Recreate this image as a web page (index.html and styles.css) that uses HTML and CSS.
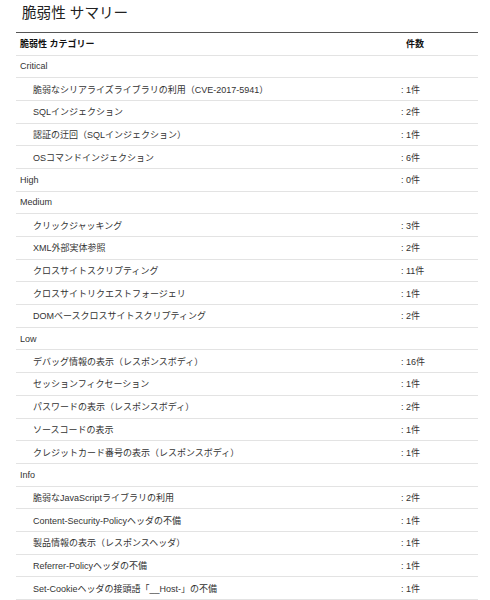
FILE: index.html
```html
<!DOCTYPE html>
<html lang="ja">
<head>
<meta charset="utf-8">
<title>脆弱性 サマリー</title>
<link rel="stylesheet" href="styles.css">
</head>
<body>
<h1 class="title">脆弱性 サマリー</h1>
<table class="summary">
  <thead>
    <tr><th class="col-name">脆弱性 カテゴリー</th><th class="col-count">件数</th></tr>
  </thead>
  <tbody>
    <tr class="cat"><td>Critical</td><td></td></tr>
    <tr class="item"><td>脆弱なシリアライズライブラリの利用（CVE-2017-5941）</td><td>: 1件</td></tr>
    <tr class="item"><td>SQLインジェクション</td><td>: 2件</td></tr>
    <tr class="item"><td>認証の迂回（SQLインジェクション）</td><td>: 1件</td></tr>
    <tr class="item"><td>OSコマンドインジェクション</td><td>: 6件</td></tr>
    <tr class="cat"><td>High</td><td>: 0件</td></tr>
    <tr class="cat"><td>Medium</td><td></td></tr>
    <tr class="item"><td>クリックジャッキング</td><td>: 3件</td></tr>
    <tr class="item"><td>XML外部実体参照</td><td>: 2件</td></tr>
    <tr class="item"><td>クロスサイトスクリプティング</td><td>: 11件</td></tr>
    <tr class="item"><td>クロスサイトリクエストフォージェリ</td><td>: 1件</td></tr>
    <tr class="item"><td>DOMベースクロスサイトスクリプティング</td><td>: 2件</td></tr>
    <tr class="cat"><td>Low</td><td></td></tr>
    <tr class="item"><td>デバッグ情報の表示（レスポンスボディ）</td><td>: 16件</td></tr>
    <tr class="item"><td>セッションフィクセーション</td><td>: 1件</td></tr>
    <tr class="item"><td>パスワードの表示（レスポンスボディ）</td><td>: 2件</td></tr>
    <tr class="item"><td>ソースコードの表示</td><td>: 1件</td></tr>
    <tr class="item"><td>クレジットカード番号の表示（レスポンスボディ）</td><td>: 1件</td></tr>
    <tr class="cat"><td>Info</td><td></td></tr>
    <tr class="item"><td>脆弱なJavaScriptライブラリの利用</td><td>: 2件</td></tr>
    <tr class="item"><td>Content-Security-Policyヘッダの不備</td><td>: 1件</td></tr>
    <tr class="item"><td>製品情報の表示（レスポンスヘッダ）</td><td>: 1件</td></tr>
    <tr class="item"><td>Referrer-Policyヘッダの不備</td><td>: 1件</td></tr>
    <tr class="item"><td>Set-Cookieヘッダの接頭語「__Host-」の不備</td><td>: 1件</td></tr>
  </tbody>
</table>
</body>
</html>
```

FILE: styles.css
```css
html, body {
  margin: 0;
  padding: 0;
  background: #fff;
}

body {
  font-family: "Liberation Sans", "Noto Sans CJK JP", sans-serif;
  color: #333;
  overflow: hidden;
}

.title {
  margin: 0;
  padding: 3px 0 0 22px;
  height: 32px;
  box-sizing: border-box;
  font-size: 14.6px;
  font-weight: normal;
  line-height: 20px;
  color: #222;
}

.summary {
  margin-left: 16px;
  width: 462px;
  border-collapse: collapse;
  font-size: 9px;
  border-top: 1.5px solid #555;
}

.summary th,
.summary td {
  text-align: left;
  padding: 0 0 0 4px;
  border-bottom: 1px solid #e3e3e3;
  white-space: nowrap;
}

.summary th {
  height: 21.5px;
  font-weight: bold;
  color: #111;
}

.summary td {
  height: 21.7px;
}

.summary .col-count {
  width: 72px;
  padding-left: 6px;
}

.summary tr.item td:first-child {
  padding-left: 17px;
}

.summary td:last-child {
  padding-left: 1px;
}
```
